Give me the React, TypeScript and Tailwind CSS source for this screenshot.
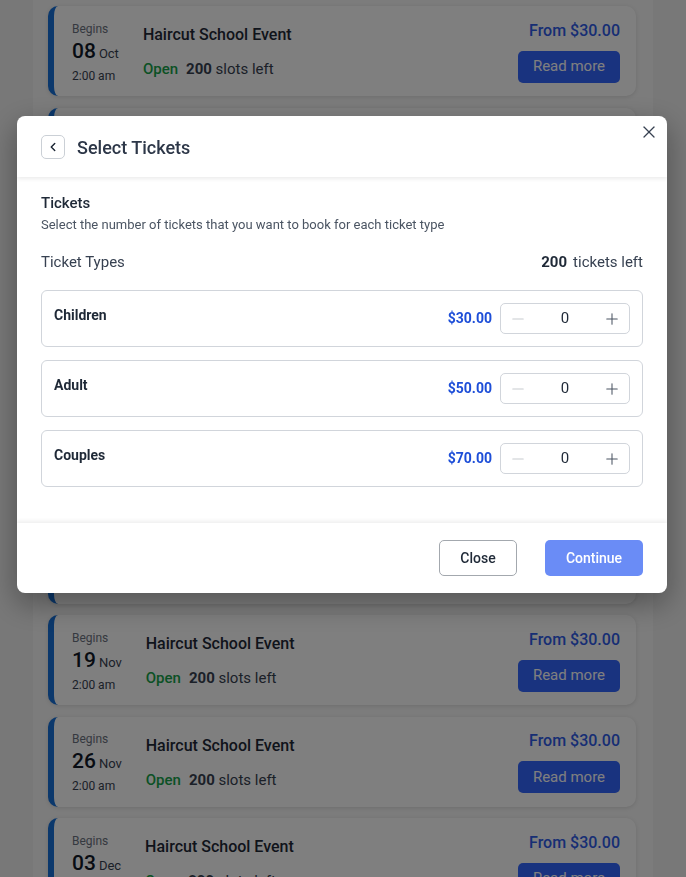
import { ChevronLeft, X, Minus, Plus } from 'lucide-react';

const events = [
  { day: '08', month: 'Oct' },
  { day: '15', month: 'Oct' },
  { day: '22', month: 'Oct' },
  { day: '29', month: 'Oct' },
  { day: '05', month: 'Nov' },
  { day: '12', month: 'Nov' },
  { day: '19', month: 'Nov' },
  { day: '26', month: 'Nov' },
  { day: '03', month: 'Dec' },
];

const tickets = [
  { name: 'Children', price: '$30.00' },
  { name: 'Adult', price: '$50.00' },
  { name: 'Couples', price: '$70.00' },
];

function EventCard({ day, month }: { day: string; month: string }) {
  return (
    <div className="h-[90px] shrink-0 bg-white rounded-[10px] border-l-[6px] border-[#1670d8] shadow-[0_1px_4px_rgba(0,0,0,0.12)] flex items-center pl-[18px] pr-4">
      <div className="flex flex-col pt-[2px] text-[#374151]">
        <span className="text-[12px] leading-[16px] text-[#6b7280]">Begins</span>
        <span className="flex items-baseline gap-[3px] leading-[28px]">
          <span className="text-[21px] font-medium text-[#111827]">{day}</span>
          <span className="text-[13px]">{month}</span>
        </span>
        <span className="text-[12px] leading-[16px]">2:00 am</span>
      </div>
      <div className="ml-6 pt-[2px] flex flex-col gap-[14px]">
        <span className="text-[16px] leading-[20px] font-medium text-[#1f2937]">Haircut School Event</span>
        <span className="text-[15px] leading-[20px] text-[#374151]">
          <span className="font-medium text-[#16a34a]">Open</span>
          <span className="font-bold ml-2">200</span> slots left
        </span>
      </div>
      <div className="ml-auto pt-[1px] flex flex-col items-end gap-[10px]">
        <span className="text-[16px] leading-[20px] font-medium text-[#2f5ce8]">From $30.00</span>
        <button className="w-[102px] h-8 rounded-[5px] bg-[#3366ff] text-white text-[15px]">Read more</button>
      </div>
    </div>
  );
}

function Stepper() {
  return (
    <div className="w-[130px] h-[31px] border border-[#d1d5db] rounded-[5px] flex items-center">
      <button className="w-[34px] h-full flex items-center justify-center text-[#c7cbd0]">
        <Minus size={18} strokeWidth={1.4} />
      </button>
      <span className="flex-1 text-center text-[15px] text-[#1f2937]">0</span>
      <button className="w-[34px] h-full flex items-center justify-center text-[#4b5563]">
        <Plus size={18} strokeWidth={1.4} />
      </button>
    </div>
  );
}

export default function App() {
  return (
    <div className="min-h-screen bg-[#f0f0f0] font-['Roboto',sans-serif]">
      <div className="w-[620px] mx-auto bg-[#f8f8f8] pl-[15px] pr-[17px] pt-[6px] flex flex-col gap-[11.5px] min-h-screen">
        {events.map((e) => (
          <EventCard key={e.day + e.month} day={e.day} month={e.month} />
        ))}
      </div>

      <div className="fixed inset-0 bg-black/50 flex justify-center items-start pt-[116px] pr-[2px]">
        <div className="relative w-[650px] bg-white rounded-[8px] shadow-[0_10px_30px_rgba(0,0,0,0.35)] flex flex-col overflow-hidden">
          <button className="absolute top-[6px] right-[8px] z-20 text-[#374151]" aria-label="Close">
            <X size={20} strokeWidth={1.5} />
          </button>
          <div className="relative z-10 h-[61px] flex items-center gap-3 px-6 pt-[1px] shadow-[0_2px_4px_rgba(0,0,0,0.08)]">
            <button className="w-6 h-6 border border-[#cbd0d6] rounded-[5px] flex items-center justify-center text-[#1f2937]">
              <ChevronLeft size={14} strokeWidth={2.5} />
            </button>
            <h2 className="text-[18px] font-medium text-[#2d3748]">Select Tickets</h2>
          </div>

          <div className="px-6 pt-4 pb-[36px]">
            <h3 className="text-[15px] leading-[20px] font-medium text-[#1f2937]">Tickets</h3>
            <p className="mt-[3px] text-[13px] leading-[18px] text-[#4b5563]">
              Select the number of tickets that you want to book for each ticket type
            </p>
            <div className="mt-[18px] flex items-center justify-between text-[15px] leading-[20px] text-[#374151]">
              <span>Ticket Types</span>
              <span>
                <span className="font-bold text-[#1f2937] mr-[6px]">200</span>tickets left
              </span>
            </div>
            <div className="mt-[18px] flex flex-col gap-[13px]">
              {tickets.map((t) => (
                <div key={t.name} className="h-[57px] border border-[#d1d5db] rounded-[6px] flex items-center px-3 py-3">
                  <span className="self-start mt-[2px] text-[14px] leading-[20px] font-bold text-[#1f2937]">{t.name}</span>
                  <span className="ml-auto mr-2 text-[14px] font-bold text-[#1d4ed8]">{t.price}</span>
                  <Stepper />
                </div>
              ))}
            </div>
          </div>

          <div className="h-[70px] flex items-center justify-end gap-7 px-6 shadow-[0_-2px_4px_rgba(0,0,0,0.07)]">
            <button className="w-[78px] h-9 border border-[#a3a8ae] rounded-[5px] text-[14px] font-medium text-[#1f2937]">Close</button>
            <button className="w-[98px] h-9 rounded-[5px] bg-[#6a8cf6] text-[14px] font-medium text-white">Continue</button>
          </div>
        </div>
      </div>
    </div>
  );
}
